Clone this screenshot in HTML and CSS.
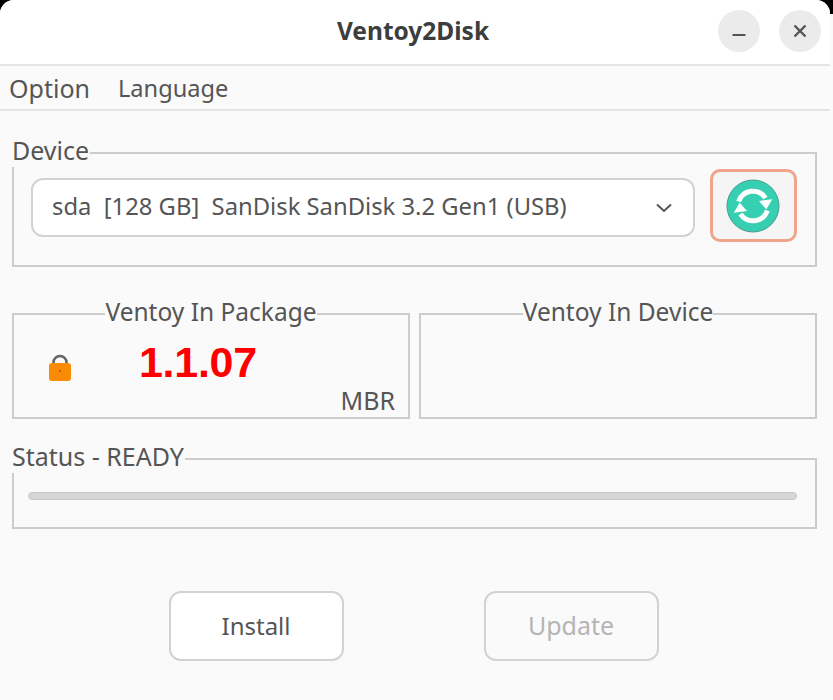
FILE: index.html
```html
<!DOCTYPE html>
<html>
<head>
    <title>Ventoy2Disk</title>
    <link rel="stylesheet" href="styles.css">
</head>
<body>
    <div class="window">
        <div class="titlebar">
            <div class="title">Ventoy2Disk</div>
            <div class="win-buttons">
                <button class="win-btn">
                    <svg width="16" height="16" viewBox="0 0 16 16"><path d="M1.500 12h13" stroke="#555" stroke-width="2"/></svg>
                </button>
                <button class="win-btn">
                    <svg width="16" height="16" viewBox="0 0 16 16"><path d="M2.500 2.500l11 11M13.500 2.500l-11 11" stroke="#555" stroke-width="2.400"/></svg>
                </button>
            </div>
        </div>
        <div class="menubar">
            <span>Option</span>
            <span class="menu-lang">Language</span>
        </div>
        <div class="content">
            <div class="group group-device">
                <div class="group-label label-left">Device</div>
                <div class="device-select">
                    <span class="device-name">sda&nbsp; [128 GB]&nbsp; SanDisk SanDisk 3.2 Gen1 (USB)</span>
                    <svg width="18" height="12" viewBox="0 0 18 12"><path d="M2 2.500l7 6.500 7-6.500" fill="none" stroke="#555" stroke-width="2"/></svg>
                </div>
                <button class="refresh">
                    <svg width="54" height="54" viewBox="0 0 54 54">
                        <circle cx="27" cy="27" r="26" fill="#36cfb2" stroke="#4a9c8c" stroke-width="1"/>
                        <path d="M12.700 22.500A15 15 0 0 1 39.500 19" fill="none" stroke="#fff" stroke-width="5"/>
                        <path d="M41.300 31.500A15 15 0 0 1 14.500 35" fill="none" stroke="#fff" stroke-width="5"/>
                        <path d="M33 22l13.300-1.700-6 10z" fill="#fff"/>
                        <path d="M21 32l-13.300 1.700 6-10z" fill="#fff"/>
                    </svg>
                </button>
            </div>
            <div class="versions">
                <div class="group group-version">
                    <div class="group-label label-center">Ventoy In Package</div>
                    <svg class="lock" width="24" height="28" viewBox="0 0 24 28">
                        <path d="M5.500 11V8.500a6.500 6.500 0 0 1 13 0V11" fill="none" stroke="#666" stroke-width="2.600"/>
                        <rect x="1" y="9" width="22" height="18" rx="3" fill="#f98b05"/>
                        <circle cx="12" cy="17" r="1.200" fill="#b56a10"/>
                    </svg>
                    <div class="version-num">1.1.07</div>
                    <div class="part-style">MBR</div>
                </div>
                <div class="group group-version">
                    <div class="group-label label-center">Ventoy In Device</div>
                </div>
            </div>
            <div class="group group-status">
                <div class="group-label label-left">Status - READY</div>
                <div class="progress"></div>
            </div>
            <div class="actions">
                <button class="action">Install</button>
                <button class="action" disabled>Update</button>
            </div>
        </div>
    </div>
</body>
</html>
```

FILE: styles.css
```css
html, body {
    margin: 0;
    height: 100%;
}
body {
    /* black shows only through the window's top corners */
    background: linear-gradient(#000 14px, #fafafa 14px);
    font-family: "Noto Sans", sans-serif;
    font-size: 25px;
    color: #555;
    overflow: hidden;
}
button {
    font-family: inherit;
    padding: 0;
}
.window {
    width: 830px;
    height: 700px;
    background-color: #fafafa;
    border-radius: 14px 14px 0 0;
    overflow: hidden;
}
.titlebar {
    height: 60px;
    background-color: #fff;
    border-bottom: 2px solid #e4e4e4;
    display: flex;
    align-items: center;
    justify-content: center;
    padding: 0 4px 4px 0;
    position: relative;
}
.title {
    font-size: 24.500px;
    font-weight: 700;
    color: #3d3d3d;
}
.win-buttons {
    position: absolute;
    top: 10px;
    right: 9px;
    display: flex;
    gap: 19px;
}
.win-btn {
    width: 42px;
    height: 42px;
    border: none;
    border-radius: 50%;
    background-color: #ebebeb;
    display: flex;
    align-items: center;
    justify-content: center;
}
.menubar {
    height: 43px;
    border-bottom: 2px solid #e4e4e4;
    display: flex;
    align-items: center;
    gap: 28px;
    padding-left: 9px;
}
.menu-lang {
    font-size: 23.600px;
}
.content {
    padding: 41px 13px 0 12px;
}
.group {
    border: 2px solid #cccccc;
    position: relative;
    box-sizing: border-box;
}
.group-label {
    position: absolute;
    top: -21px;
    line-height: 34px;
    background-color: #fafafa;
    white-space: nowrap;
}
.label-left {
    left: -2px;
    padding-right: 1px;
}
.label-center {
    top: -20px;
    left: 0;
    right: 0;
    width: fit-content;
    margin: 0 auto;
    font-size: 24.500px;
}
.group-device {
    height: 115px;
    display: flex;
    align-items: flex-start;
    padding: 0 18px 0 17px;
    gap: 15px;
}
.device-select {
    flex: 1;
    height: 59px;
    margin-top: 24px;
    box-sizing: border-box;
    background-color: #fff;
    border: 2px solid #d2d2d2;
    border-radius: 12px;
    display: flex;
    align-items: center;
    justify-content: space-between;
    padding: 0 20px 0 19px;
}
.device-name {
    font-size: 23.800px;
    padding-bottom: 3px;
}
.refresh {
    width: 87px;
    height: 73px;
    margin-top: 15px;
    padding-right: 2px;
    box-sizing: border-box;
    border: 3px solid #eea58b;
    border-radius: 10px;
    background-color: #f5f5f5;
    display: flex;
    align-items: center;
    justify-content: center;
}
.versions {
    display: flex;
    gap: 9px;
    margin-top: 46px;
}
.group-version {
    width: 399px;
    height: 106px;
}
.lock {
    position: absolute;
    left: 34px;
    top: 39px;
}
.version-num {
    position: absolute;
    left: 125px;
    top: 23px;
    font-family: "Liberation Sans", sans-serif;
    font-size: 43px;
    font-weight: 700;
    letter-spacing: -0.300px;
    color: #ff0000;
}
.part-style {
    position: absolute;
    right: 13px;
    bottom: 0;
}
.group-status {
    height: 71px;
    margin-top: 39px;
    display: flex;
    align-items: center;
    padding: 0 18px 0 14px;
}
.progress {
    flex: 1;
    height: 8px;
    margin-top: 5px;
    background-color: #d6d6d6;
    border: 1px solid #c9c9c9;
    border-radius: 5px;
    box-sizing: border-box;
}
.actions {
    display: flex;
    justify-content: center;
    gap: 140px;
    margin-top: 62px;
    padding-right: 2px;
}
.action {
    width: 175px;
    height: 70px;
    box-sizing: border-box;
    border: 2px solid #d2d2d2;
    border-radius: 12px;
    background-color: #fff;
    font-size: 24px;
    color: #555;
    padding-bottom: 2px;
}
.action:disabled {
    background-color: #fafafa;
    color: #b5b5b5;
    font-size: 25px;
}
```
